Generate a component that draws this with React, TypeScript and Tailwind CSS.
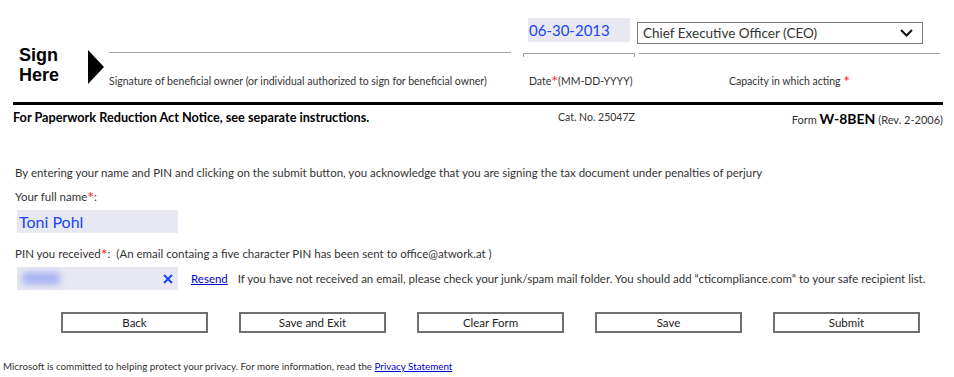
import React from "react";

const font = { fontFamily: "Lato, 'Open Sans', sans-serif" };

function Star() {
  return <span className="text-[#ff2020] text-[16px] leading-[0] relative top-[2px]">*</span>;
}

function Button({ label }: { label: string }) {
  return (
    <button className="w-[147px] h-[21px] border-2 border-[#707070] bg-white text-[11.5px] text-[#222] leading-none">
      {label}
    </button>
  );
}

export default function App() {
  return (
    <div className="w-[954px] h-[377px] bg-white text-[#222] overflow-hidden" style={font}>
      {/* Sign here block */}
      <div className="flex h-[102px]">
        <div className="w-[88px] pl-[19px] pt-[45px] font-bold text-[18px] leading-[20px] text-black" style={{ fontFamily: "'Liberation Sans', Arial, sans-serif" }}>
          <div>Sign</div>
          <div>Here</div>
        </div>
        <div className="w-[21px] pt-[50px]">
          <svg width="16" height="34" viewBox="0 0 16 34">
            <polygon points="0,0 16,17 0,34" fill="#000" />
          </svg>
        </div>
        <div className="w-[402px] flex flex-col">
          <div className="h-[53px] border-b border-[#a0a0a0]" />
          <div className="mt-[21px] text-[10.5px] leading-[14px] text-[#333] whitespace-nowrap">
            Signature of beneficial owner (or individual authorized to sign for beneficial owner)
          </div>
        </div>
        <div className="w-[112px] ml-[12px] flex flex-col">
          <div className="h-[53px] pt-[18px] pl-[5px]">
            <div className="w-[102px] h-[24px] bg-[#e8e8f2] text-[#1a44f0] text-[15px] leading-[24px] pl-[1px]">06-30-2013</div>
          </div>
          <div className="h-[4px] border-t border-x border-[#a0a0a0]" />
          <div className="mt-[17px] pl-[6px] text-[10.5px] leading-[14px] text-[#333] whitespace-nowrap">
            Date<Star />(MM-DD-YYYY)
          </div>
        </div>
        <div className="w-[301px] ml-[4px] flex flex-col">
          <div className="h-[53px] pt-[22px] -ml-[2px]">
            <div className="w-[286px] h-[22px] border border-[#7a7a7a] flex items-center justify-between pl-[5px] pr-[9px] text-[13.5px] text-[#333]">
              <span>Chief Executive Officer (CEO)</span>
              <svg width="13" height="8" viewBox="0 0 13 8">
                <polyline points="1,1 6.5,6.5 12,1" fill="none" stroke="#111" strokeWidth="2" />
              </svg>
            </div>
          </div>
          <div className="border-t border-[#a0a0a0]" />
          <div className="mt-[20px] text-center text-[10.5px] leading-[14px] text-[#333]">
            Capacity in which acting <Star />
          </div>
        </div>
      </div>

      {/* Footer of the form */}
      <div className="mx-[13px] w-[930px] h-[3px] bg-black" />
      <div className="flex items-center h-[26px] pl-[13px] pr-[11px] text-[11px]">
        <div className="w-[545px] font-bold text-[12.7px] text-black whitespace-nowrap">For Paperwork Reduction Act Notice, see separate instructions.</div>
        <div className="w-[200px] text-[10.5px] text-[#333]">Cat. No. 25047Z</div>
        <div className="flex-1 text-right text-[#333]">
          Form <span className="font-bold text-[14px] text-black">W-8BEN</span> (Rev. 2-2006)
        </div>
      </div>

      {/* Signing */}
      <div className="pl-[15px] pt-[34px] text-[11.5px] text-[#333]">
        <div className="leading-[16px] whitespace-nowrap">
          By entering your name and PIN and clicking on the submit button, you acknowledge that you are signing the tax document under penalties of perjury
        </div>
        <div className="mt-[8px] leading-[16px]">
          Your full name<Star />:
        </div>
        <div className="mt-[5px] ml-[2px] w-[161px] h-[23px] bg-[#e8e8f2] text-[#1a44f0] text-[16px] leading-[23px] pl-[2px]">Toni Pohl</div>
        <div className="mt-[13px] leading-[16px] whitespace-nowrap">
          PIN you received<Star />:&nbsp; (An email containg a five character PIN has been sent to office@atwork.at )
        </div>
        <div className="mt-[5px] flex items-center whitespace-nowrap">
          <div className="ml-[2px] w-[161px] h-[23px] bg-[#e8e8f2] flex items-center justify-between pl-[5px] pr-[5px]">
            <div className="w-[38px] h-[13px] bg-[#a9b6f2] blur-[3px] rounded" />
            <svg width="10" height="10" viewBox="0 0 10 10">
              <path d="M1 1 L9 9 M9 1 L1 9" stroke="#1a44f0" strokeWidth="2" />
            </svg>
          </div>
          <a className="ml-[13px] text-[#0000cc] underline">Resend</a>
          <span className="ml-[10px]">
            If you have not received an email, please check your junk/spam mail folder. You should add “cticompliance.com” to your safe recipient list.
          </span>
        </div>
      </div>

      <div className="flex pl-[61px] gap-[31px] mt-[22px]">
        <Button label="Back" />
        <Button label="Save and Exit" />
        <Button label="Clear Form" />
        <Button label="Save" />
        <Button label="Submit" />
      </div>

      <div className="pl-[3px] mt-[27px] text-[9.8px] leading-[12px] text-[#333] whitespace-nowrap">
        Microsoft is committed to helping protect your privacy. For more information, read the{" "}
        <a className="text-[#0000cc] underline">Privacy Statement</a>
      </div>
    </div>
  );
}
